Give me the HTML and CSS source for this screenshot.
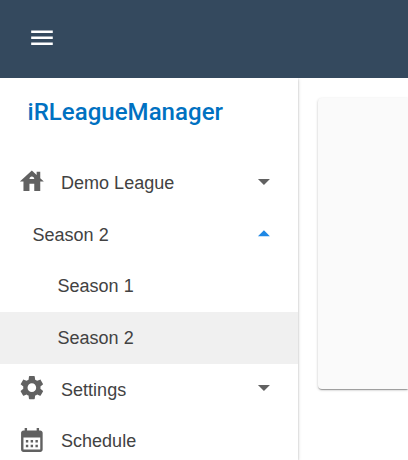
FILE: index.html
```html
<!DOCTYPE html>
<html lang="en">
<head>
<meta charset="utf-8">
<title>iRLeagueManager</title>
<link rel="stylesheet" href="styles.css">
</head>
<body>
<header class="appbar">
  <svg class="icon" viewBox="0.35 0.6 24 24"><path d="M3 18h18v-2H3v2zm0-5h18v-2H3v2zm0-7v2h18V6H3z"/></svg>
</header>
<div class="layout">
  <aside class="drawer">
    <h1 class="brand">iRLeagueManager</h1>
    <nav>
      <div class="item">
        <svg class="icon" viewBox="0.45 0 24 24"><path d="M19 9.3V4h-3v2.6L12 3 2 12h3v8h5v-6h4v6h5v-8h3l-3-2.7zm-9 .7c0-1.1.9-2 2-2s2 .9 2 2h-4z"/></svg>
        <span class="label">Demo League</span>
        <svg class="icon arrow" viewBox="0.4 0 24 24"><path d="M7 10l5 5 5-5z"/></svg>
      </div>
      <div class="item season">
        <span class="label">Season 2</span>
        <svg class="icon arrow open" viewBox="0.4 -0.4 24 24"><path d="M7 14l5-5 5 5z"/></svg>
      </div>
      <div class="item child"><span class="label">Season 1</span></div>
      <div class="item child active"><span class="label">Season 2</span></div>
      <div class="item">
        <svg class="icon" viewBox="0.45 -0.2 24 24"><path d="M19.14 12.94c.04-.3.06-.61.06-.94 0-.32-.02-.64-.07-.94l2.03-1.58c.18-.14.23-.41.12-.61l-1.92-3.32c-.12-.22-.37-.29-.59-.22l-2.39.96c-.5-.38-1.03-.7-1.62-.94l-.36-2.54c-.04-.24-.24-.41-.48-.41h-3.84c-.24 0-.43.17-.47.41l-.36 2.54c-.59.24-1.13.57-1.62.94l-2.39-.96c-.22-.08-.47 0-.59.22L2.74 8.87c-.12.21-.08.47.12.61l2.03 1.58c-.05.3-.09.63-.09.94s.02.64.07.94l-2.03 1.58c-.18.14-.23.41-.12.61l1.92 3.32c.12.22.37.29.59.22l2.39-.96c.5.38 1.03.7 1.62.94l.36 2.54c.05.24.24.41.48.41h3.84c.24 0 .44-.17.47-.41l.36-2.54c.59-.24 1.13-.56 1.62-.94l2.39.96c.22.08.47 0 .59-.22l1.92-3.32c.12-.22.07-.47-.12-.61l-2.01-1.58zM12 15.6c-1.98 0-3.6-1.62-3.6-3.6s1.62-3.6 3.6-3.6 3.6 1.62 3.6 3.6-1.62 3.6-3.6 3.6z"/></svg>
        <span class="label">Settings</span>
        <svg class="icon arrow" viewBox="0.4 0 24 24"><path d="M7 10l5 5 5-5z"/></svg>
      </div>
      <div class="item">
        <svg class="icon" viewBox="0.45 -0.5 24 24"><path d="M19 4h-1V2h-2v2H8V2H6v2H5C3.89 4 3.01 4.9 3.01 6L3 20c0 1.1.89 2 2 2h14c1.1 0 2-.9 2-2V6c0-1.1-.9-2-2-2zm0 16H5V10h14v10zM9 14H7v-2h2v2zm4 0h-2v-2h2v2zm4 0h-2v-2h2v2zm-8 4H7v-2h2v2zm4 0h-2v-2h2v2zm4 0h-2v-2h2v2z"/></svg>
        <span class="label">Schedule</span>
      </div>
    </nav>
  </aside>
  <main class="content"><section class="card"></section></main>
</div>
</body>
</html>
```

FILE: styles.css
```css
* { box-sizing: border-box; }

body {
  margin: 0;
  height: 460px;
  overflow: hidden;
  background: #fff;
  color: #424242;
  font-family: "Liberation Sans", Arial, sans-serif;
  font-size: 18px;
}

.icon {
  display: block;
  flex: none;
  width: 28.8px;
  height: 28.8px;
  overflow: visible;
  fill: #616161;
}

.appbar {
  height: 78px;
  padding: 23.6px 27.6px 0;
  background: #34495e;
}

.appbar .icon { fill: #fff; }

.layout {
  display: flex;
  height: 382px;
}

.drawer {
  flex: none;
  width: 298px;
  box-shadow: 0 3px 2px -2px rgba(0, 0, 0, .2), 0 1px 2px rgba(0, 0, 0, .2), 0 1px 4px rgba(0, 0, 0, .14);
  clip-path: inset(0 -10px 0 0);
}

.brand {
  margin: 0;
  height: 79.2px;
  padding: 18px 0 0 27.5px;
  color: #0071c1;
  font: 500 24px/32px Roboto, sans-serif;
  letter-spacing: .04px;
}

.item {
  display: flex;
  align-items: center;
  height: 51.6px;
  padding: 0 19.6px 0 17.8px;
}

.item .icon { margin-top: -3.2px; }

.label {
  flex: 1;
  margin-left: 14.4px;
  padding-top: 1.3px;
  line-height: 27px;
  letter-spacing: .02px;
}

.season .label { margin-left: 14.7px; }
.child .label { margin-left: 39.7px; }
.active { background: #f0f0f0; }
.item .open { margin-top: -1.4px; fill: #1e88e5; }

.content {
  flex: 1;
  min-width: 0;
  padding: 20px 0 0 20px;
}

.card {
  width: 100%;
  height: 291px;
  border-radius: 4px 0 0 4px;
  background: #fafafa;
  box-shadow: 0 2px 1px -1px rgba(0, 0, 0, .2), 0 1px 1px rgba(0, 0, 0, .14), 0 1px 3px rgba(0, 0, 0, .2);
}
```
